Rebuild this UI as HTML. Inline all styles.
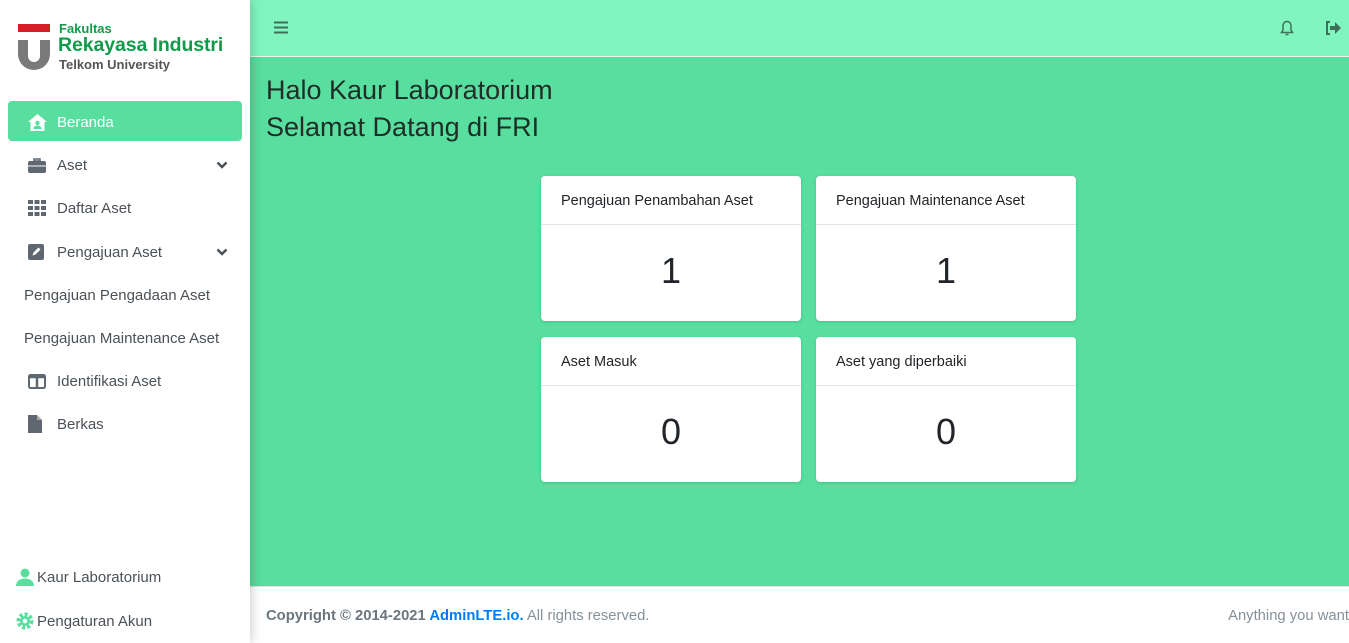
<!DOCTYPE html>
<html><head><meta charset="utf-8"><style>
*{box-sizing:border-box;margin:0;padding:0}
body{width:1349px;height:643px;overflow:hidden;font-family:"Liberation Sans",sans-serif;background:#58de9f;position:relative}
.sb{position:absolute;left:0;top:0;width:250px;height:643px;background:#fff;box-shadow:0 0 12px rgba(0,0,0,.25);z-index:2}
.hd{position:absolute;left:250px;top:0;right:0;height:57px;background:#81f5c0;border-bottom:1px solid #e9f7ef}
.nav{position:absolute;left:8px;width:234px;height:40px;font-size:15px;color:#4b5157;display:flex;align-items:center;padding-top:2px}
.nav svg{position:absolute;left:20px}
.nav span{position:absolute;left:49px}
.act{background:#58de9f;color:#fff;border-radius:4px}
.nav svg.chev{left:auto;right:14px}
.card{position:absolute;width:260px;height:145px;background:#fff;border-radius:4px;box-shadow:0 1px 3px rgba(0,0,0,.15)}
.card .t{height:49px;border-bottom:1px solid #e5e5e5;padding:17px 20px;font-size:14.5px;color:#212529}
.card .v{text-align:center;font-size:36px;color:#212529;padding-top:25px}
.ft{position:absolute;left:250px;top:586px;right:0;height:57px;background:#fff;border-top:1px solid #dee2e6;font-size:14.8px;color:#869099;padding:21px 16px}
</style></head><body>
<div class="hd">
<svg style="position:absolute;left:24px;top:21px" width="14" height="13" viewBox="0 0 14 13"><path d="M0 1.5h14M0 6.5h14M0 11.5h14" stroke="#3f6f58" stroke-width="2"/></svg>
<svg style="position:absolute;left:1030px;top:20px" width="14" height="16" viewBox="0 0 14 16"><path d="M7 1.5C4.5 1.5 3 3.5 3 6v4L1.5 12.5h11L11 10V6c0-2.5-1.5-4.5-4-4.5zM5.5 14.5h3" fill="none" stroke="#3f6f58" stroke-width="1.5"/></svg>
<svg style="position:absolute;left:1075px;top:21px" width="16" height="14" viewBox="0 0 16 14"><path d="M5 1H2v12h3" fill="none" stroke="#3f6f58" stroke-width="2"/><path d="M5 5h5V1l6 6-6 6V9H5z" fill="#3f6f58"/></svg>
</div>
<div class="sb">
<div style="position:absolute;left:18px;top:24px;width:32px;height:8px;background:#d51f26"></div>
<div style="position:absolute;left:18px;top:40px;width:32px;height:30px;background:#7a7a7a;border-radius:0 0 16px 16px"></div>
<div style="position:absolute;left:28px;top:40px;width:12px;height:22px;background:#fff;border-radius:0 0 6px 6px"></div>
<div style="position:absolute;left:59px;top:21px;font-size:13px;font-weight:bold;color:#129a4b">Fakultas</div>
<div style="position:absolute;left:58px;top:34px;font-size:19.5px;font-weight:bold;color:#129a4b;letter-spacing:-0.1px">Rekayasa Industri</div>
<div style="position:absolute;left:59px;top:57px;font-size:13px;font-weight:bold;color:#555">Telkom University</div>
<div class="nav act" style="top:101px"><svg width="19" height="17" viewBox="0 0 19 17"><path d="M9.5 0L0 8h2.5v9h14V8H19z" fill="#fff"/><circle cx="9.5" cy="9" r="2.2" fill="#58de9f"/><path d="M5.5 15c0-2.5 2-3.5 4-3.5s4 1 4 3.5z" fill="#58de9f"/></svg><span>Beranda</span></div>
<div class="nav" style="top:144px"><svg width="18" height="15" viewBox="0 0 18 15"><path d="M6 1h6v2H6z" fill="none" stroke="#5f6870" stroke-width="1.5"/><rect x="0" y="3" width="18" height="12" rx="2" fill="#5f6870"/><path d="M0 8h18" stroke="#fff"/></svg><span>Aset</span><svg class="chev" width="12" height="8" viewBox="0 0 12 8"><path d="M1.5 1.5L6 6l4.5-4.5" fill="none" stroke="#4b5157" stroke-width="2.5"/></svg></div>
<div class="nav" style="top:187px"><svg width="18" height="16" viewBox="0 0 18 16" fill="#5f6870"><rect width="5" height="4"/><rect x="6.5" width="5" height="4"/><rect x="13" width="5" height="4"/><rect y="6" width="5" height="4"/><rect x="6.5" y="6" width="5" height="4"/><rect x="13" y="6" width="5" height="4"/><rect y="12" width="5" height="4"/><rect x="6.5" y="12" width="5" height="4"/><rect x="13" y="12" width="5" height="4"/></svg><span>Daftar Aset</span></div>
<div class="nav" style="top:231px"><svg width="16" height="16" viewBox="0 0 16 16"><rect width="16" height="16" rx="2" fill="#5f6870"/><path d="M4.5 11.5l1-3 5-5 2 2-5 5z" fill="#fff"/></svg><span>Pengajuan Aset</span><svg class="chev" width="12" height="8" viewBox="0 0 12 8"><path d="M1.5 1.5L6 6l4.5-4.5" fill="none" stroke="#4b5157" stroke-width="2.5"/></svg></div>
<div class="nav" style="top:274px"><span style="left:16px">Pengajuan Pengadaan Aset</span></div>
<div class="nav" style="top:317px"><span style="left:16px">Pengajuan Maintenance Aset</span></div>
<div class="nav" style="top:360px"><svg width="18" height="15" viewBox="0 0 18 15"><rect x="1" y="1" width="16" height="13" rx="1.5" fill="none" stroke="#5f6870" stroke-width="2"/><path d="M9 1v13M1 3h16" stroke="#5f6870" stroke-width="2.5"/></svg><span>Identifikasi Aset</span></div>
<div class="nav" style="top:403px"><svg width="14" height="18" viewBox="0 0 14 18"><path d="M0 0h9l5 5v13H0z" fill="#5f6870"/><path d="M9 0v5h5" fill="#aaa"/></svg><span>Berkas</span></div>
<svg style="position:absolute;left:16px;top:568px" width="18" height="18" viewBox="0 0 18 18" fill="#58de9f"><circle cx="9" cy="5" r="4.5"/><path d="M0 18c0-5 4-7.5 9-7.5s9 2.5 9 7.5z"/></svg>
<div style="position:absolute;left:37px;top:569px;font-size:15px;color:#4b5157">Kaur Laboratorium</div>
<svg style="position:absolute;left:16px;top:612px" width="18" height="18" viewBox="0 0 18 18"><circle cx="9" cy="9" r="6.5" fill="none" stroke="#58de9f" stroke-width="4" stroke-dasharray="3 2"/><circle cx="9" cy="9" r="5" fill="#58de9f"/><circle cx="9" cy="9" r="2.3" fill="#fff"/></svg>
<div style="position:absolute;left:37px;top:613px;font-size:15px;color:#4b5157">Pengaturan Akun</div>
</div>
<div style="position:absolute;left:266px;top:72px;font-size:27px;color:#1f2d27;line-height:37px">Halo Kaur Laboratorium<br>Selamat Datang di FRI</div>
<div class="card" style="left:541px;top:176px"><div class="t">Pengajuan Penambahan Aset</div><div class="v">1</div></div>
<div class="card" style="left:816px;top:176px"><div class="t">Pengajuan Maintenance Aset</div><div class="v">1</div></div>
<div class="card" style="left:541px;top:337px"><div class="t">Aset Masuk</div><div class="v">0</div></div>
<div class="card" style="left:816px;top:337px"><div class="t">Aset yang diperbaiki</div><div class="v">0</div></div>
<div class="ft"><b style="color:#6c757d">Copyright © 2014-2021 <span style="color:#007bff">AdminLTE.io.</span></b> All rights reserved.<span style="position:absolute;right:0;">Anything you want</span></div>
</body></html>
